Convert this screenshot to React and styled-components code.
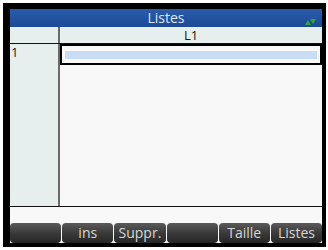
import styled, { createGlobalStyle } from "styled-components";

const Global = createGlobalStyle`
  html, body {
    margin: 0;
    padding: 0;
    background: #ffffff;
  }
`;

const Frame = styled.div`
  margin: 3px 2px 3px 3px;
  border-style: solid;
  border-color: #000;
  border-width: 6px 4px 4px 7px;
  width: 312px;
  height: 234px;
  display: flex;
  flex-direction: column;
  background: #f8f8f8;
  font-family: "Open Sans", "Noto Sans", sans-serif;
`;

const TitleBar = styled.div`
  height: 18px;
  position: relative;
  display: flex;
  align-items: center;
  justify-content: center;
  background: linear-gradient(#2a5cab, #1c4a96);
  color: #dde7f6;
  font-size: 14px;
  line-height: 18px;
`;

const Indicator = styled.svg`
  position: absolute;
  right: 6px;
  bottom: 2px;
`;

const HeadRow = styled.div`
  height: 16px;
  display: flex;
  background: #e7eeee;
  border-bottom: 1px solid #111;
  font-size: 13px;
  color: #1a1a1a;
`;

const IndexCell = styled.div`
  width: 48px;
  border-right: 2px solid #6a6a6a;
`;

const ColHead = styled.div`
  flex: 1;
  text-align: center;
  line-height: 16px;
`;

const Body = styled.div`
  height: 162px;
  display: flex;
  border-bottom: 1px solid #111;
`;

const IndexCol = styled.div`
  width: 47px;
  background: #e7eeee;
  border-right: 2px solid #6a6a6a;
  padding-left: 1px;
`;

const IndexNum = styled.div`
  height: 17px;
  line-height: 17px;
  font-size: 13px;
  color: #222;
`;

const DataCol = styled.div`
  flex: 1;
  background: #f8f8f8;
`;

const SelCell = styled.div`
  height: 13px;
  border: 2px solid #000;
  padding: 2px 3px;
  display: flex;
  align-items: center;
`;

const Fill = styled.div`
  flex: 1;
  height: 8px;
  background: #c8dcf3;
`;

const Gap = styled.div`
  height: 16px;
`;

const Menu = styled.div`
  height: 20px;
  display: grid;
  grid-template-columns: repeat(6, 1fr);
  gap: 1px;
`;

const Key = styled.div`
  border-radius: 4px;
  background: linear-gradient(#5a5a5a, #3a3a3a 50%, #262626);
  color: #d6d6d6;
  font-size: 14px;
  line-height: 20px;
  text-align: center;
  overflow: hidden;
  white-space: nowrap;
`;

const keys = ["", "ins", "Suppr.", "", "Taille", "Listes"];

export default function App() {
  return (
    <>
      <Global />
      <Frame>
        <TitleBar>
          Listes
          <Indicator width="11" height="6" viewBox="0 0 11 6">
            <polygon points="0,6 3,1 6,6" fill="#2fa83a" />
            <polygon points="5,0 11,0 8,5" fill="#2fa83a" />
          </Indicator>
        </TitleBar>
        <HeadRow>
          <IndexCell />
          <ColHead>L1</ColHead>
        </HeadRow>
        <Body>
          <IndexCol>
            <IndexNum>1</IndexNum>
          </IndexCol>
          <DataCol>
            <SelCell>
              <Fill />
            </SelCell>
          </DataCol>
        </Body>
        <Gap />
        <Menu>
          {keys.map((k, i) => (
            <Key key={i}>{k}</Key>
          ))}
        </Menu>
      </Frame>
    </>
  );
}
